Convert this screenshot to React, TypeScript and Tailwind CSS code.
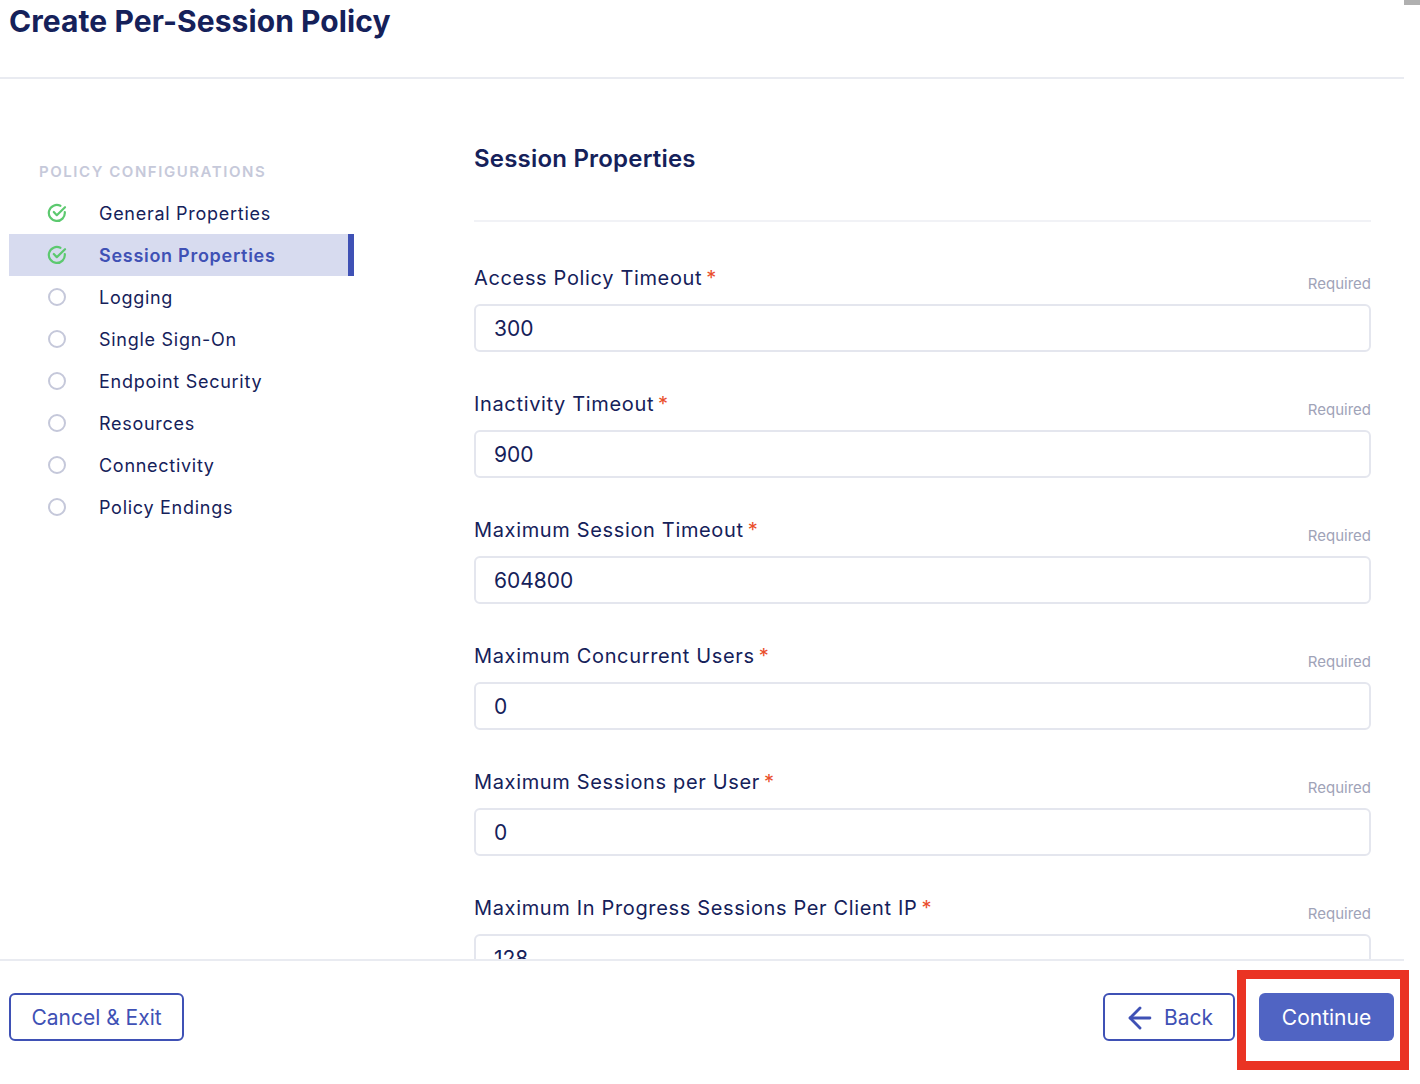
import { ArrowLeft } from 'lucide-react';

const steps = [
  { name: 'General Properties', done: true },
  { name: 'Session Properties', done: true, active: true },
  { name: 'Logging' },
  { name: 'Single Sign-On' },
  { name: 'Endpoint Security' },
  { name: 'Resources' },
  { name: 'Connectivity' },
  { name: 'Policy Endings' },
];

const fields = [
  { label: 'Access Policy Timeout', value: '300' },
  { label: 'Inactivity Timeout', value: '900' },
  { label: 'Maximum Session Timeout', value: '604800' },
  { label: 'Maximum Concurrent Users', value: '0' },
  { label: 'Maximum Sessions per User', value: '0' },
  { label: 'Maximum In Progress Sessions Per Client IP', value: '128' },
];

function StepIcon({ done }: { done?: boolean }) {
  if (!done) {
    return (
      <svg width="20" height="20" viewBox="0 0 20 20" fill="none">
        <circle cx="10" cy="10" r="8" stroke="#c5c8da" strokeWidth="2" />
      </svg>
    );
  }
  return (
    <svg width="20" height="20" viewBox="0 0 20 20" fill="none" stroke="#5cc96f" strokeWidth="2.2" strokeLinecap="round" strokeLinejoin="round">
      <path d="M17.8 9.2A8 8 0 1 1 13.4 2.8" />
      <path d="M6.8 9l3 3.2L18 4.2" />
    </svg>
  );
}

export default function App() {
  return (
    <div className="relative h-[1084px] w-[1420px] overflow-hidden bg-white font-['Inter',sans-serif] text-[#15215a]">
      <div className="absolute right-0 top-0 h-[5px] w-4 bg-[#b0b0b0]" />

      {/* Header */}
      <div className="h-[79px] w-[1404px] border-b-2 border-[#e9ebf1] pl-[9px] pt-[2px]">
        <h1 className="text-[30px] font-bold leading-[38px] tracking-[0.08px]">Create Per-Session Policy</h1>
      </div>

      <div className="flex h-[880px] w-[1404px] overflow-hidden">
        {/* Sidebar */}
        <div className="w-[474px] shrink-0 pl-[9px] pt-[83px]">
          <p className="pl-[30px] text-[15px] font-semibold leading-[20px] tracking-[1.55px] text-[#c6c9da]">POLICY CONFIGURATIONS</p>
          <div className="mt-[10px] w-[345px]">
            {steps.map((step) => (
              <div
                key={step.name}
                className={
                  step.active
                    ? 'flex h-[42px] items-center border-r-[6px] border-[#3f51b5] bg-[#d7dbef] pl-[38px] font-semibold text-[#3f51b5]'
                    : 'flex h-[42px] items-center pl-[38px]'
                }
              >
                <StepIcon done={step.done} />
                <span className="ml-[32px] pt-[2px] text-lg leading-6 tracking-[0.72px]">{step.name}</span>
              </div>
            ))}
          </div>
        </div>

        {/* Form */}
        <div className="w-[897px] shrink-0 pt-[62px]">
          <h2 className="h-[81px] border-b-2 border-[#f1f2f6] text-2xl font-semibold leading-9 tracking-[0.2px]">Session Properties</h2>
          <div className="flex flex-col gap-[35px] pt-[39px]">
            {fields.map((field) => (
              <div key={field.label}>
                <div className="flex h-[31px] items-start justify-between">
                  <label className="text-xl leading-[34px] tracking-[0.65px]">
                    {field.label}
                    <span className="ml-1 text-[#ea4e2c]">*</span>
                  </label>
                  <span className="mt-[13px] text-[15px] leading-5 text-[#9fa3b8]">Required</span>
                </div>
                <div className="mt-[12px] flex h-[48px] items-center rounded-md border-2 border-[#e4e6ee] pl-[18px] pt-[2px] text-[21px]">
                  {field.value}
                </div>
              </div>
            ))}
          </div>
        </div>
      </div>

      {/* Footer */}
      <div className="flex h-[125px] w-[1404px] items-start justify-between border-t-2 border-[#e9ebf1] pl-[9px] pr-[10px] pt-[32px]">
        <button className="flex h-[48px] w-[175px] items-center justify-center rounded-md border-2 border-[#3f51b5] pt-[2px] text-[21px] text-[#3f51b5]">
          Cancel &amp; Exit
        </button>
        <div className="flex gap-6">
          <button className="flex h-[48px] w-[132px] items-center gap-[7px] rounded-md border-2 border-[#3f51b5] pl-[18px] pt-[2px] text-[21px] text-[#3f51b5]">
            <ArrowLeft size={34} strokeWidth={2} />
            Back
          </button>
          <button className="flex h-[48px] w-[135px] items-center justify-center rounded-md bg-[#5064c3] pt-[2px] text-[21px] text-white">
            Continue
          </button>
        </div>
      </div>

      {/* Annotation */}
      <div className="absolute left-[1237px] top-[970px] h-[100px] w-[172px] border-[9px] border-[#ea3323]" />
    </div>
  );
}
